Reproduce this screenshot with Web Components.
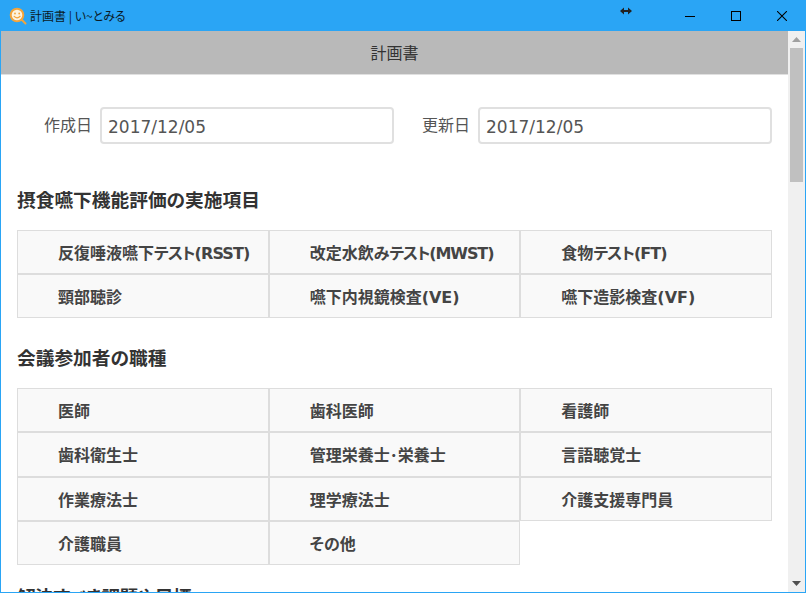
<!DOCTYPE html>
<html lang="ja">
<head>
<meta charset="utf-8">
<title>計画書 | い~とみる</title>
<style>
  html, body { margin: 0; height: 100%; overflow: hidden; background: #fff; }
  body {
    font-family: "DejaVu Sans", "Noto Sans CJK JP", sans-serif;
    font-feature-settings: "palt";
    color: #333;
  }
</style>
</head>
<body>
<app-window>
  <form-field slot="dates" label="作成日" value="2017/12/05"></form-field>
  <form-field slot="dates" label="更新日" value="2017/12/05"></form-field>

  <option-group title="摂食嚥下機能評価の実施項目">
    <option-cell>反復唾液嚥下<span>テスト(RSST)</span></option-cell>
    <option-cell>改定水飲み<span style="letter-spacing: -1.1px">テスト(MWST)</span></option-cell>
    <option-cell>食物<span>テスト(FT)</span></option-cell>
    <option-cell>頸部聴診</option-cell>
    <option-cell>嚥下内視鏡検査<span style="letter-spacing: 0">(VE)</span></option-cell>
    <option-cell>嚥下造影検査<span style="letter-spacing: 0">(VF)</span></option-cell>
  </option-group>

  <option-group title="会議参加者の職種">
    <option-cell>医師</option-cell>
    <option-cell>歯科医師</option-cell>
    <option-cell>看護師</option-cell>
    <option-cell>歯科衛生士</option-cell>
    <option-cell>管理栄養士･栄養士</option-cell>
    <option-cell>言語聴覚士</option-cell>
    <option-cell>作業療法士</option-cell>
    <option-cell>理学療法士</option-cell>
    <option-cell>介護支援専門員</option-cell>
    <option-cell>介護職員</option-cell>
    <option-cell>その他</option-cell>
  </option-group>

  <option-group title="解決すべき課題や目標" style="margin-top: -8px; --title-spacing: -0.6px"></option-group>
</app-window>

<script>
// Window chrome: title bar, page header, scrolling body and a fake scrollbar.
class AppWindow extends HTMLElement {
  constructor() {
    super();
    this.attachShadow({ mode: 'open' });
    this.shadowRoot.innerHTML = `
      <style>
        :host {
          display: flex;
          flex-direction: column;
          box-sizing: border-box;
          width: 806px;
          height: 593px;
          border: 1px solid #2aa5f5;
          border-top: 0;
          overflow: hidden;
        }
        #titlebar {
          flex: 0 0 31px;
          display: flex;
          align-items: center;
          background: #2aa5f5;
          color: #0b1a26;
          font-family: "Noto Sans CJK JP", sans-serif;
          font-size: 12px;
          position: relative;
        }
        #titlebar .logo { margin: 0 3px 0 8px; display: block; }
        #titlebar .name { flex: 1; position: relative; top: -0.5px; }
        #resize { position: absolute; left: 618px; top: 6px; display: block; }
        .winbtn { width: 46px; height: 31px; display: flex; align-items: center; justify-content: center; }
        #main { flex: 1; display: flex; min-height: 0; }
        #column { flex: 1; min-width: 0; display: flex; flex-direction: column; }
        #header {
          flex: 0 0 44px;
          box-sizing: border-box;
          background: #b9b9b9;
          border-bottom: 1px solid #e0e0e0;
          text-align: center;
          font-size: 16px;
          line-height: 45px;
          color: #333;
          overflow: hidden;
        }
        #body { flex: 1; min-height: 0; overflow: hidden; padding: 0 16px; }
        #dates { display: flex; gap: 28px; padding-left: 27px; margin-top: 32px; margin-bottom: 43px; }
        #scrollbar {
          flex: 0 0 17px;
          background: #f0f0f0;
          display: flex;
          flex-direction: column;
          align-items: center;
        }
        #scrollbar .arrow { flex: 0 0 17px; display: flex; align-items: center; justify-content: center; }
        #thumb { width: 13px; height: 134px; background: #c0c0c0; }
        #spacer { flex: 1; }
      </style>
      <div id="titlebar">
        <svg class="logo" width="18" height="18" viewBox="0 0 18 18">
          <path d="M12.5 12.5 L16.5 16.5" stroke="#f2a43c" stroke-width="2" stroke-linecap="round"/>
          <circle cx="8" cy="8" r="6.3" fill="#fdf3df" stroke="#f2a43c" stroke-width="2"/>
          <circle cx="6" cy="6.5" r="0.9" fill="#f2a43c"/>
          <circle cx="10.2" cy="6.5" r="0.9" fill="#f2a43c"/>
          <path d="M4.8 9.2 Q8 12.6 11.4 9" fill="none" stroke="#f2a43c" stroke-width="1.1"/>
        </svg>
        <span class="name">計画書 | い~とみる</span>
        <svg id="resize" width="14" height="10" viewBox="0 0 14 10">
          <path d="M1 5 L5 1.5 V4 H9 V1.5 L13 5 L9 8.5 V6 H5 V8.5 Z" fill="#222"/>
        </svg>
        <span class="winbtn"><svg width="10" height="10" viewBox="0 0 10 10"><path d="M0 5.5 H10" stroke="#000"/></svg></span>
        <span class="winbtn"><svg width="10" height="10" viewBox="0 0 10 10"><rect x="0.5" y="0.5" width="9" height="9" fill="none" stroke="#000"/></svg></span>
        <span class="winbtn"><svg width="10" height="10" viewBox="0 0 10 10"><path d="M0 0 L10 10 M10 0 L0 10" stroke="#000" stroke-width="1.05"/></svg></span>
      </div>
      <div id="main">
        <div id="column">
          <div id="header">計画書</div>
          <div id="body">
            <div id="dates"><slot name="dates"></slot></div>
            <slot></slot>
          </div>
        </div>
        <div id="scrollbar">
          <div class="arrow"><svg width="9" height="5" viewBox="0 0 9 5"><path d="M4.5 0 L9 5 H0 Z" fill="#a0a0a0"/></svg></div>
          <div id="thumb"></div>
          <div id="spacer"></div>
          <div class="arrow"><svg width="9" height="5" viewBox="0 0 9 5"><path d="M0 0 H9 L4.5 5 Z" fill="#505050"/></svg></div>
        </div>
      </div>
    `;
  }
}

// Label plus text box, sharing the date row equally.
class FormField extends HTMLElement {
  constructor() {
    super();
    this.attachShadow({ mode: 'open' });
    this.shadowRoot.innerHTML = `
      <style>
        :host { display: flex; flex: 1; align-items: center; justify-content: flex-end; gap: 8px; }
        label { font-size: 16px; line-height: 20px; color: #555; white-space: nowrap; }
        #box {
          box-sizing: border-box;
          width: 294px;
          height: 37px;
          border: 2px solid #e0e0e0;
          border-radius: 4px;
          padding: 0 6px;
          font-size: 17px;
          line-height: 36px;
          color: #555;
          background: #fff;
        }
      </style>
      <label></label>
      <div id="box"></div>
    `;
    this.shadowRoot.querySelector('label').textContent = this.getAttribute('label');
    this.shadowRoot.getElementById('box').textContent = this.getAttribute('value');
  }
}

// Section heading followed by a three-column grid of choices.
class OptionGroup extends HTMLElement {
  constructor() {
    super();
    this.attachShadow({ mode: 'open' });
    this.shadowRoot.innerHTML = `
      <style>
        :host { display: block; margin-bottom: 26.8px; }
        h2 {
          margin: 0 0 17px;
          font-size: 18.72px;
          line-height: 27px;
          height: 26px;
          font-weight: 700;
          color: #333;
          letter-spacing: var(--title-spacing, 0);
        }
        #cells { display: grid; grid-template-columns: repeat(3, 1fr); }
      </style>
      <h2></h2>
      <div id="cells"><slot></slot></div>
    `;
    this.shadowRoot.querySelector('h2').textContent = this.getAttribute('title');
  }
}

class OptionCell extends HTMLElement {
  constructor() {
    super();
    this.attachShadow({ mode: 'open' });
    this.shadowRoot.innerHTML = `
      <style>
        :host {
          display: block;
          box-sizing: border-box;
          height: 44.2px;
          border: 1px solid #dddddd;
          background: #f9f9f9;
          padding-left: 40px;
          font-size: 16px;
          font-weight: 700;
          line-height: 46px;
          color: #444;
          white-space: nowrap;
        }
        ::slotted(span) { letter-spacing: -0.9px; }
      </style>
      <slot></slot>
    `;
  }
}

customElements.define('app-window', AppWindow);
customElements.define('form-field', FormField);
customElements.define('option-group', OptionGroup);
customElements.define('option-cell', OptionCell);
</script>
</body>
</html>
